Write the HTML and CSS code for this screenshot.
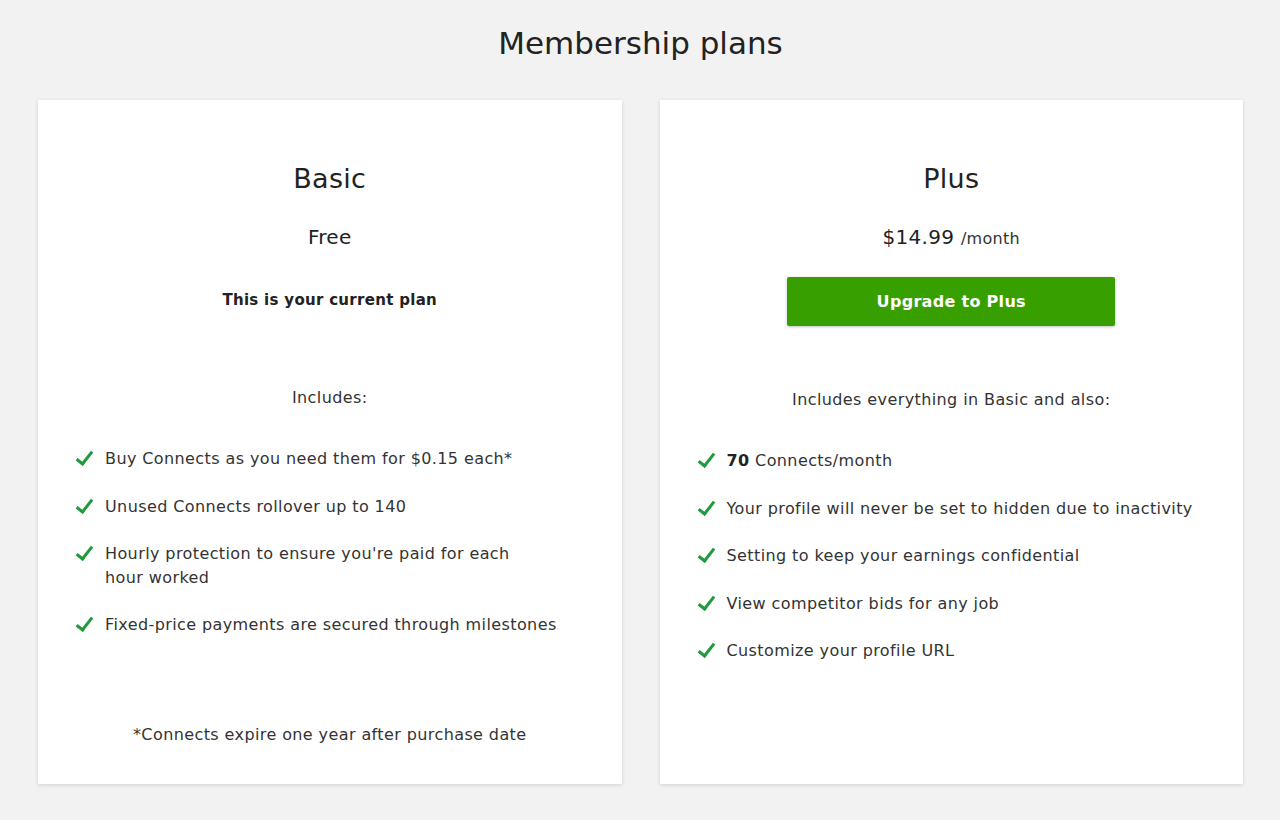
FILE: index.html
```html
<!DOCTYPE html>
<html lang="en">
<head>
    <meta charset="UTF-8">
    <meta name="viewport" content="width=device-width, initial-scale=1.0">
    <title>Membership plans</title>
    <link rel="stylesheet" href="styles.css">
</head>
<body>
    <div class="page">
        <h1 class="page-title">Membership plans</h1>

        <div class="plans">
            <div class="plan">
                <h2 class="plan-name">Basic</h2>
                <div class="plan-price">Free</div>
                <div class="plan-action">
                    <span class="current">This is your current plan</span>
                </div>
                <div class="includes">Includes:</div>
                <ul class="features">
                    <li>Buy Connects as you need them for $0.15 each*</li>
                    <li>Unused Connects rollover up to 140</li>
                    <li>Hourly protection to ensure you're paid for each<br>hour worked</li>
                    <li>Fixed-price payments are secured through milestones</li>
                </ul>
                <div class="plan-note">*Connects expire one year after purchase date</div>
            </div>

            <div class="plan">
                <h2 class="plan-name">Plus</h2>
                <div class="plan-price">$14.99 <span class="per">/month</span></div>
                <div class="plan-action">
                    <button class="btn-upgrade" type="button">Upgrade to Plus</button>
                </div>
                <div class="includes">Includes everything in Basic and also:</div>
                <ul class="features">
                    <li><strong>70</strong> Connects/month</li>
                    <li>Your profile will never be set to hidden due to inactivity</li>
                    <li>Setting to keep your earnings confidential</li>
                    <li>View competitor bids for any job</li>
                    <li>Customize your profile URL</li>
                </ul>
            </div>
        </div>
    </div>
</body>
</html>
```

FILE: styles.css
```css
body {
    font-family: "DejaVu Sans", "Open Sans", sans-serif;
    margin: 0;
    padding: 0;
    background-color: #f2f2f2;
    color: #222;
}
.page {
    padding: 23px 37px 36px 38px;
}
.page-title {
    margin: 0 0 37px;
    font-size: 31px;
    font-weight: normal;
    line-height: 40px;
    text-align: center;
    color: #222;
}
.plans {
    display: grid;
    grid-template-columns: 1fr 1fr;
    gap: 38px;
}
.plan {
    display: flex;
    flex-direction: column;
    background-color: white;
    padding: 61px 37px 37px;
    box-shadow: 0 1px 4px rgba(0, 0, 0, 0.14);
    min-height: 586px;
}
.plan-name {
    margin: 0;
    font-size: 27px;
    font-weight: normal;
    line-height: 36px;
    text-align: center;
    letter-spacing: 0.3px;
}
.plan-price {
    margin-top: 26px;
    font-size: 20px;
    line-height: 28px;
    text-align: center;
    letter-spacing: 0.3px;
}
.plan-price .per {
    font-size: 16px;
    color: #333;
}
.plan-action {
    display: flex;
    justify-content: center;
    align-items: center;
    height: 49px;
    margin-top: 24px;
}
.current {
    font-size: 15px;
    font-weight: bold;
    letter-spacing: 0.3px;
}
.btn-upgrade {
    width: 328px;
    height: 49px;
    background-color: #37a000;
    color: white;
    font-family: inherit;
    font-size: 16px;
    font-weight: bold;
    letter-spacing: 0.3px;
    border: none;
    border-radius: 2px;
    box-shadow: 0 1px 3px rgba(0, 0, 0, 0.25);
    cursor: pointer;
}
.btn-upgrade:hover {
    background-color: #2f8a00;
}
.includes {
    margin-top: 62px;
    font-size: 16px;
    line-height: 24px;
    text-align: center;
    letter-spacing: 0.4px;
    color: #333;
}
.features {
    list-style: none;
    margin: 37px -7px 0 0;
    padding: 0;
}
.features li {
    position: relative;
    padding-left: 30px;
    margin-bottom: 24px;
    font-size: 16px;
    line-height: 23.5px;
    letter-spacing: 0.4px;
    color: #333;
}
.features li::before {
    content: "";
    position: absolute;
    left: 5px;
    top: 1px;
    width: 6px;
    height: 14px;
    border: solid #1f9a3c;
    border-width: 0 3.5px 3.5px 0;
    transform: rotate(38deg);
}
.features strong {
    color: #222;
}
.plan-note {
    margin-top: auto;
    font-size: 16px;
    line-height: 24px;
    text-align: center;
    letter-spacing: 0.4px;
    color: #333;
}
```
